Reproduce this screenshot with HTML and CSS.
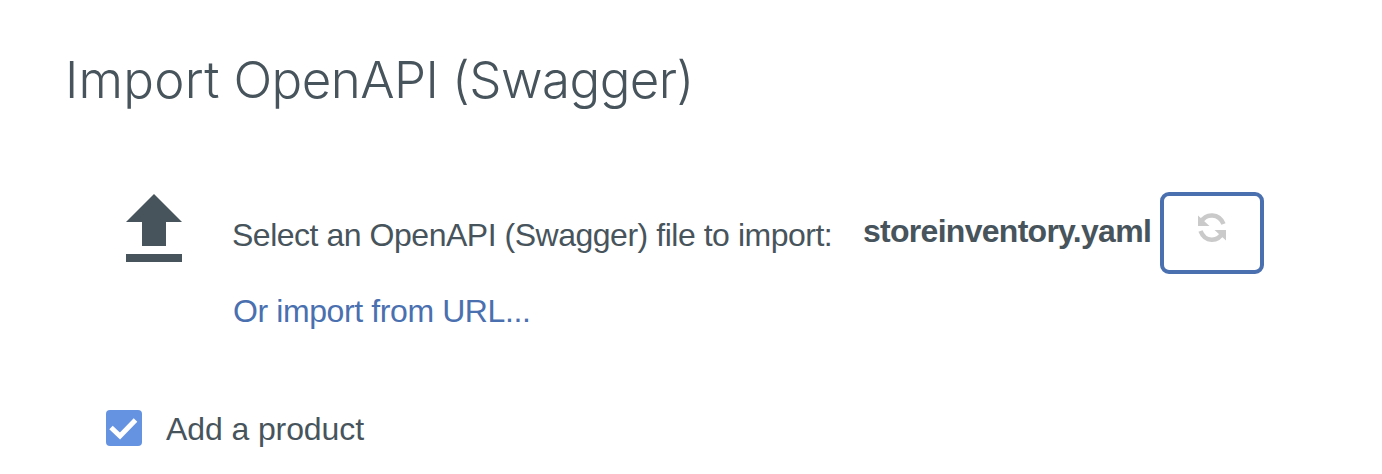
FILE: index.html
```html
<!DOCTYPE html>
<html lang="en">
<head>
<meta charset="utf-8">
<title>Import OpenAPI (Swagger)</title>
<link rel="stylesheet" href="styles.css">
</head>
<body>
<main class="dialog">
  <h1 class="title"><span class="verb">Import</span> OpenAPI (Swagger)</h1>
  <section class="import">
    <svg class="upload" viewBox="0 0 56 68" aria-hidden="true"><path d="M28 0 56 28H40V52H16V28H0ZM0 60H56V68H0Z"/></svg>
    <div class="source">
      <div class="row">
        <span class="label">Select an OpenAPI (Swagger) file to import:</span>
        <strong class="file">storeinventory.yaml</strong>
        <button class="refresh" aria-label="Reload file">
          <svg viewBox="0 0 30 30" aria-hidden="true"><path class="arc" d="M4 9C9 0 22 0 26.500 11M26 19C21 29.500 8 29.500 3.500 18"/><path class="head" d="M1 2.500V13H12.500ZM29 27.500V17H17.500Z"/></svg>
        </button>
      </div>
      <a class="url">Or import from URL...</a>
    </div>
  </section>
  <label class="product">
    <span class="box"><svg viewBox="0 0 36 36" aria-hidden="true"><path d="M5 17.500 14 26 29.500 10"/></svg></span>
    <span class="product-text">Add a product</span>
  </label>
</main>
</body>
</html>
```
FILE: styles.css
```css
* { box-sizing: border-box; }
body { margin: 0; background: #fff; color: #47545c; font: 33px/40px "Liberation Sans", Arial, sans-serif; }
.dialog { height: 474px; padding: 50px 66px 0 64px; overflow: hidden; }
.title { margin: 0 0 0 1px; font: 300 51px/60px Inter, sans-serif; letter-spacing: -0.55px; white-space: nowrap; }
.verb { letter-spacing: 0.25px; }
.import { display: flex; margin-top: 82px; padding-left: 62px; height: 218px; }
.upload { flex: none; width: 56px; height: 68px; margin-top: 2px; fill: #47545c; }
.source { margin-left: 49px; }
.row { display: flex; height: 82px; white-space: nowrap; }
.label { width: 633px; padding: 23px 0 0 1px; font-size: 32px; letter-spacing: -0.49px; word-spacing: 0.1px; }
.file { width: 296px; padding-top: 19px; margin-left: -1px; margin-right: 1px; font-size: 32px; letter-spacing: -0.72px; }
.refresh { flex: none; display: flex; justify-content: center; width: 104px; height: 82px; padding: 17px 0 0; border: 4px solid #4a70b0; border-radius: 9px; background: #fff; }
.refresh svg { width: 30px; height: 30px; }
.arc { fill: none; stroke: #cacaca; stroke-width: 4.5; }
.head { fill: #cacaca; }
.url { display: block; margin: 17px 0 0 2px; color: #4a70b0; font-size: 32px; letter-spacing: -0.4px; }
.product { display: flex; padding-left: 42px; }
.box { width: 36px; height: 36px; border-radius: 4px; background: #6593e2; }
.box svg { display: block; fill: none; stroke: #fff; stroke-width: 5; }
.product-text { margin: -1px 0 0 24px; font-size: 32px; letter-spacing: -0.1px; }
```
